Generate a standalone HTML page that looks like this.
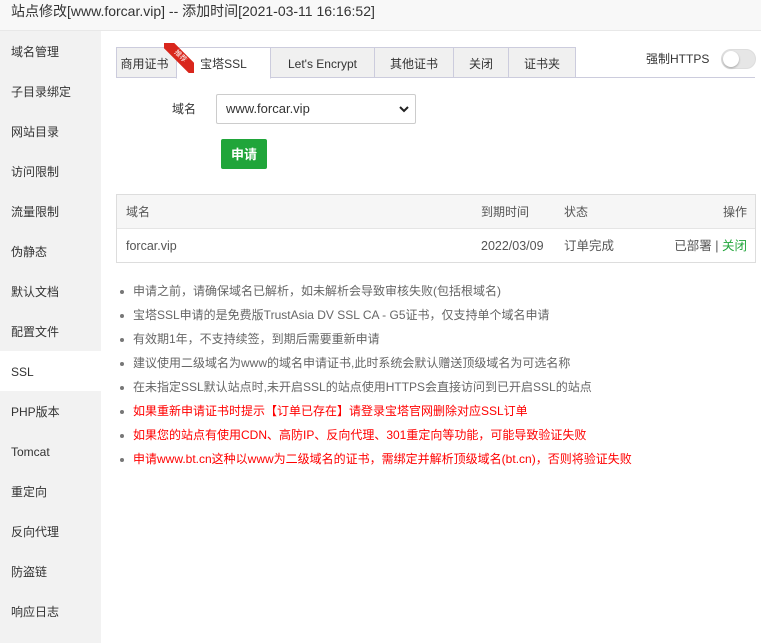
<!DOCTYPE html>
<html><head><meta charset="utf-8"><style>
*{margin:0;padding:0;box-sizing:border-box}
body{width:761px;height:643px;overflow:hidden;font-family:"Liberation Sans","Noto Sans CJK SC",sans-serif;font-size:12px;color:#555;background:#fff;position:relative}
.hd{position:absolute;left:0;top:0;width:761px;height:31px;background:#f8f8f8;border-bottom:1px solid #e8e8e8;font-size:14px;color:#333;line-height:22px;padding-left:11px}
.sb{position:absolute;left:0;top:31px;width:101px;height:612px;background:#f2f2f2}
.sb div{height:40px;line-height:42px;padding-left:11px;color:#333;font-size:12px}
.sb .on{background:#fff}
.tabs{position:absolute;left:116px;top:47px;height:31px;width:639px;border-bottom:1px solid #ccd;}
.tab{position:absolute;top:0;height:31px;border:1px solid #ccd;background:#f0f0f0;display:flex;align-items:center;justify-content:center;padding-top:2px;color:#333;font-size:12px;line-height:14px}
.tab.on{background:#fff;border-bottom-color:#fff;height:32px}
.rib{position:absolute;left:164px;top:43px;width:30px;height:30px;overflow:hidden}
.rib span{position:absolute;left:-6px;top:8px;width:44px;height:11px;background:#d9261c;color:#fff;font-size:7px;line-height:11px;text-align:center;transform:rotate(45deg)}
.sw{position:absolute;left:721px;top:49px;width:35px;height:20px;border-radius:10px;background:#e6e6e6;border:1px solid #ddd}
.sw:after{content:"";position:absolute;left:1px;top:1px;width:16px;height:16px;border-radius:50%;background:#fff;box-shadow:0 1px 2px rgba(0,0,0,.3)}
.sel{position:absolute;left:216px;top:94px;width:200px;height:30px;border:1px solid #ccc;border-radius:2px;padding-left:9px;line-height:28px;font-size:13px;color:#333}
.btn{position:absolute;left:221px;top:139px;width:46px;height:30px;background:#20a53a;border-radius:2px;color:#fff;font-weight:bold;font-size:13px;line-height:31px;text-align:center}
.tb{position:absolute;left:116px;top:194px;width:640px;height:69px;border:1px solid #ddd}
.tb .h{height:34px;background:#f6f6f6;border-bottom:1px solid #e5e5e5;position:relative}
.tb .r{height:34px;position:relative;font-size:12.5px}
.tb span{position:absolute;top:10px;line-height:14px;height:14px;white-space:nowrap}
.tb .r span{top:10px}
ul{position:absolute;left:116px;top:280px;list-style:none}
li{height:24px;line-height:22px;padding-left:17px;position:relative;color:#666;font-size:12px}
li:before{content:"";position:absolute;left:4px;top:10px;width:4px;height:4px;border-radius:50%;background:#777}
li.red{color:#f00}
</style></head><body>
<div class="hd">站点修改[www.forcar.vip] -- 添加时间[2021-03-11 16:16:52]</div>
<div class="sb">
<div>域名管理</div><div>子目录绑定</div><div>网站目录</div><div>访问限制</div><div>流量限制</div><div>伪静态</div><div>默认文档</div><div>配置文件</div><div class="on">SSL</div><div>PHP版本</div><div>Tomcat</div><div>重定向</div><div>反向代理</div><div>防盗链</div><div>响应日志</div>
</div>
<div class="tabs">
<div class="tab" style="left:0;width:61px;padding-right:4px">商用证书</div>
<div class="tab on" style="left:60px;width:95px">宝塔SSL</div>
<div class="tab" style="left:154px;width:105px">Let's Encrypt</div>
<div class="tab" style="left:258px;width:80px">其他证书</div>
<div class="tab" style="left:337px;width:56px">关闭</div>
<div class="tab" style="left:392px;width:68px">证书夹</div>
</div>
<div class="rib"><span>推荐</span></div>
<div style="position:absolute;left:646px;top:52px;color:#333;line-height:14px">强制HTTPS</div>
<div class="sw"></div>
<div style="position:absolute;left:172px;top:102px;color:#333;line-height:14px">域名</div>
<div class="sel">www.forcar.vip<svg style="position:absolute;right:6px;top:11px" width="10" height="7" viewBox="0 0 10 7"><path d="M1 1l4 4 4-4" fill="none" stroke="#222" stroke-width="2"/></svg></div>
<div class="btn">申请</div>
<div class="tb">
<div class="h"><span style="left:9px">域名</span><span style="left:364px">到期时间</span><span style="left:447px">状态</span><span style="right:8px">操作</span></div>
<div class="r"><span style="left:9px">forcar.vip</span><span style="left:364px">2022/03/09</span><span style="left:447px">订单完成</span><span style="right:8px">已部署 | <b style="font-weight:normal;color:#20a53a">关闭</b></span></div>
</div>
<ul>
<li>申请之前，请确保域名已解析，如未解析会导致审核失败(包括根域名)</li>
<li>宝塔SSL申请的是免费版TrustAsia DV SSL CA - G5证书，仅支持单个域名申请</li>
<li>有效期1年，不支持续签，到期后需要重新申请</li>
<li>建议使用二级域名为www的域名申请证书,此时系统会默认赠送顶级域名为可选名称</li>
<li>在未指定SSL默认站点时,未开启SSL的站点使用HTTPS会直接访问到已开启SSL的站点</li>
<li class="red">如果重新申请证书时提示【订单已存在】请登录宝塔官网删除对应SSL订单</li>
<li class="red">如果您的站点有使用CDN、高防IP、反向代理、301重定向等功能，可能导致验证失败</li>
<li class="red">申请www.bt.cn这种以www为二级域名的证书，需绑定并解析顶级域名(bt.cn)，否则将验证失败</li>
</ul>
</body></html>
